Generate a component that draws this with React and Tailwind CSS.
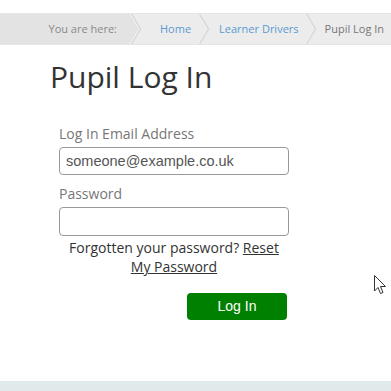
import React from "react";

function Chevron({ fillLeft = "transparent" }) {
  return (
    <svg width="11" height="30" viewBox="0 0 11 30" className="shrink-0 block">
      <polygon points="0,0 1,0 10,15 1,30 0,30" fill={fillLeft} />
      <polyline points="1,0 10,15 1,30" fill="none" stroke="#dadada" strokeWidth="2.5" />
      <polyline points="0,0 9,15 0,30" fill="none" stroke="#f6f6f6" strokeWidth="1" />
    </svg>
  );
}

export default function App() {
  return (
    <div className="relative w-[391px] h-[391px] bg-white overflow-hidden" style={{ fontFamily: '"Open Sans", sans-serif' }}>
      <div className="h-[13px]" />
      <div className="border-y border-[#e6e6e6] bg-[#ececec] h-[32px] flex items-center text-[11px] whitespace-nowrap overflow-hidden">
        <div className="w-[130px] shrink-0 h-[30px] bg-[#e3e3e3] flex items-center justify-end pr-[13px] text-[#8a8a8a]">You are here:</div>
        <Chevron fillLeft="#e3e3e3" />
        <div className="ml-[19px] shrink-0 text-[#5b9ad2]">Home</div>
        <div className="ml-[7px] shrink-0"><Chevron /></div>
        <div className="ml-[10px] shrink-0 text-[#5b9ad2]">Learner Drivers</div>
        <div className="ml-[6px] shrink-0"><Chevron /></div>
        <div className="ml-[9px] shrink-0 text-[#777]">Pupil Log In</div>
      </div>
      <div className="pl-[50px] pt-[12px]">
        <h1 className="text-[30px] leading-[40px] text-[#333]">Pupil Log In</h1>
      </div>
      <div className="pl-[59px] pt-[28px] w-[289px]">
        <div className="text-[14px] leading-[18px] text-[#777]">Log In Email Address</div>
        <input
          className="mt-[4px] w-[230px] h-[28px] border border-[#999] rounded-[4px] px-[6px] text-[14.5px] text-[#555] placeholder:text-[#555] block"
          style={{ fontFamily: '"Liberation Sans", Arial, sans-serif' }}
          placeholder="someone@example.co.uk"
        />
        <div className="mt-[10px] text-[14px] leading-[18px] text-[#777]">Password</div>
        <input
          type="password"
          className="mt-[4px] w-[230px] h-[29px] border border-[#999] rounded-[4px] px-[6px] block"
        />
        <p className="w-[230px] text-center text-[14px] leading-[19px] text-[#333] mt-[2px]">
          Forgotten your password? <span className="underline">Reset My Password</span>
        </p>
        <div className="w-[230px] flex justify-end mt-[17px] pr-[2px]">
          <button
            className="w-[100px] h-[27px] bg-[#008000] rounded-[4px] text-white text-[14px]"
            style={{ fontFamily: '"Liberation Sans", Arial, sans-serif' }}
          >
            Log In
          </button>
        </div>
      </div>
      <div className="absolute left-0 right-0 bottom-0 h-[10px] bg-[#e1eaea]" />
      <svg className="absolute left-[374px] top-[275px]" width="13" height="20" viewBox="0 0 13 20">
        <path d="M0.5,0.5 L0.5,16 L4,12.5 L6.5,18.5 L9,17.5 L6.5,11.5 L11.5,11.5 Z" fill="white" stroke="#333" strokeWidth="1" strokeLinejoin="round" />
      </svg>
    </div>
  );
}
